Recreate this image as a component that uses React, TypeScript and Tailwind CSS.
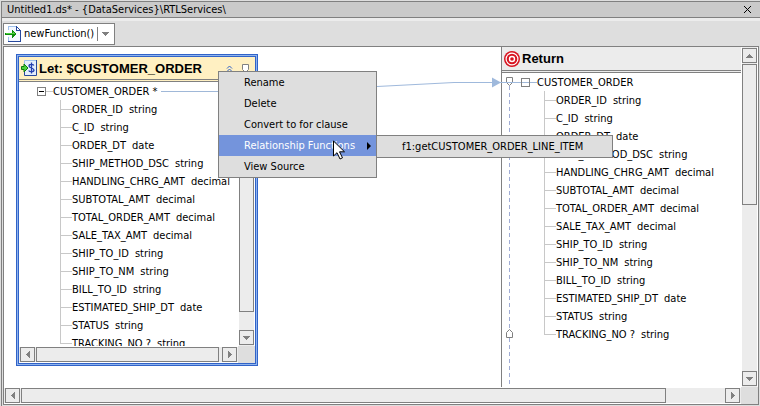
import type { ReactNode } from 'react';

type Field = { name: string; type: string };

const fields: Field[] = [
  { name: 'ORDER_ID', type: 'string' },
  { name: 'C_ID', type: 'string' },
  { name: 'ORDER_DT', type: 'date' },
  { name: 'SHIP_METHOD_DSC', type: 'string' },
  { name: 'HANDLING_CHRG_AMT', type: 'decimal' },
  { name: 'SUBTOTAL_AMT', type: 'decimal' },
  { name: 'TOTAL_ORDER_AMT', type: 'decimal' },
  { name: 'SALE_TAX_AMT', type: 'decimal' },
  { name: 'SHIP_TO_ID', type: 'string' },
  { name: 'SHIP_TO_NM', type: 'string' },
  { name: 'BILL_TO_ID', type: 'string' },
  { name: 'ESTIMATED_SHIP_DT', type: 'date' },
  { name: 'STATUS', type: 'string' },
  { name: 'TRACKING_NO ?', type: 'string' },
];

const arrows = {
  up: 'M3 0h1v1h1v1h1v1h1v1H0V3h1V2h1V1h1z',
  down: 'M0 0h7v1H6v1H5v1H4v1H3V3H2V2H1V1H0z',
  left: 'M4 0v7H3V6H2V5H1V4H0V3h1V2h1V1h1V0z',
  right: 'M0 0v7h1V6h1V5h1V4h1V3H3V2H2V1H1V0z',
};

type Direction = keyof typeof arrows;

function Arrow({ direction }: { direction: Direction }) {
  const upright = direction === 'up' || direction === 'down';
  return (
    <svg width={upright ? 7 : 4} height={upright ? 4 : 7} fill="currentColor" shapeRendering="crispEdges" aria-hidden="true">
      <path d={arrows[direction]} />
    </svg>
  );
}

function ScrollButton({ direction }: { direction: Direction }) {
  return (
    <button
      type="button"
      aria-label={`Scroll ${direction}`}
      className="flex size-[15px] shrink-0 items-center justify-center border border-[#808080] bg-[#ececec] text-[#808080]"
    >
      <Arrow direction={direction} />
    </button>
  );
}

function VerticalScroll({ thumb }: { thumb: string }) {
  return (
    <div className="flex w-[17px] shrink-0 flex-col border-x border-white bg-[#ececec] py-px">
      <ScrollButton direction="up" />
      <div className="flex-1 pt-px">
        <div className={`border border-[#808080] bg-[#ececec] ${thumb}`} />
      </div>
      <ScrollButton direction="down" />
    </div>
  );
}

function HorizontalScroll({ thumb }: { thumb: string }) {
  return (
    <div className="flex h-[17px] min-w-0 flex-1 border-y border-white bg-[#ececec] px-px">
      <ScrollButton direction="left" />
      <div className="flex-1 pl-px">
        <div className={`h-[15px] border border-[#808080] bg-[#ececec] ${thumb}`} />
      </div>
      <ScrollButton direction="right" />
    </div>
  );
}

function FieldList() {
  return (
    <ul>
      {fields.map((field, i) => (
        <li key={field.name} className="flex h-[18px] items-start leading-5 whitespace-nowrap">
          <span className="flex w-3 flex-col self-stretch">
            <span className="h-[10px] border-b border-l border-[#c8c8c8]" />
            {i < fields.length - 1 && <span className="flex-1 border-l border-[#c8c8c8]" />}
          </span>
          <span>{field.name}</span>
          <span className="ml-1.5">{field.type}</span>
        </li>
      ))}
    </ul>
  );
}

function FunctionIcon() {
  return (
    <svg width="16" height="16" viewBox="0 0 16 16" shapeRendering="crispEdges" aria-hidden="true">
      <path d="M3 .5h8.5l4 4v11H3z" fill="#f4f8ff" />
      <path d="M3 0h9v1H3z" fill="#9fc0ea" />
      <path d="M3 0h1v4H3zM3 11h1v5H3z" fill="#9fc0ea" />
      <path d="M3 15h13v1H3zM15 4h1v12h-1zM11 0h1v1h1v1h1v1h1v1h1v1h-5z" fill="#28489c" />
      <path d="M12 2h1v1h1v1h-2z" fill="#fff" />
      <path d="M0 7h7V4h1v1h1v1h1v1h1v2h-1v1H9v1H8v1H7V9H0z" fill="#0c8a0c" />
      <path d="M1 7h7V6h1v1h1v1H1z" fill="#4cd03c" />
    </svg>
  );
}

function LetIcon() {
  return (
    <svg width="16" height="16" viewBox="0 0 16 16" aria-hidden="true">
      <path d="M3 .5h12.5v15H3z" fill="#e4eefc" />
      <path d="M3.500 4V.5H15" fill="none" stroke="#9fc0ea" />
      <path d="M3.500 12v3.500h12V0" fill="none" stroke="#28489c" />
      <path d="M.5 6.500h2.500V4L7 8l-4 4V9.500H.5z" fill="#4cd03c" stroke="#0c7a0c" />
      <path d="M12.800 5.500C12 4 8 3.800 8 6s5 1.800 5 4-4.500 2.200-5.300.5M10.500 2.500v11" fill="none" stroke="#2440b0" strokeWidth="1.300" />
    </svg>
  );
}

function TargetIcon() {
  return (
    <svg width="16" height="16" viewBox="0 0 16 16" aria-hidden="true">
      <circle cx="8" cy="8" r="8" fill="#d81420" />
      <circle cx="8" cy="8" r="6.500" fill="#fff" />
      <circle cx="8" cy="8" r="5.300" fill="#d81420" />
      <circle cx="8" cy="8" r="3.200" fill="#fff" />
      <circle cx="8" cy="8" r="1.800" fill="#d81420" />
    </svg>
  );
}

function ZoneMarker({ flipped = false }: { flipped?: boolean }) {
  return (
    <svg width="7" height="9" viewBox="0 0 7 9" className={flipped ? 'rotate-180' : ''} aria-hidden="true">
      <path d="M.5.5h6v5l-3 3-3-3z" fill="#fff" stroke="#808080" />
    </svg>
  );
}

function MenuItem({ children, active = false }: { children: ReactNode; active?: boolean }) {
  return (
    <button
      type="button"
      role="menuitem"
      className={`flex h-[21px] w-full items-center justify-between pr-[5px] pl-[25px] whitespace-nowrap ${active ? 'bg-[#7494dc] text-white' : ''}`}
    >
      {children}
    </button>
  );
}

function LetPanel() {
  return (
    <section className="mt-[7px] ml-3 w-[242px] shrink-0 self-start border border-[#3163c8] bg-[#8fb4ee] p-px">
      <div className="border border-[#3163c8] bg-white">
        <header className="flex h-[25px] items-center border-b-3 border-double border-[#808080] bg-[#fff0c2] pr-[6px] pl-[2px]">
          <LetIcon />
          <h2 className="ml-[2px] flex-1 pt-px font-['Liberation_Sans',Arial,sans-serif] text-[13px] leading-4 font-bold whitespace-nowrap">
            Let: $CUSTOMER_ORDER
          </h2>
          <button type="button" aria-label="Collapse" className="mr-[9px]">
            <svg width="7" height="7" viewBox="0 0 7 7" fill="none" stroke="#3163c8" aria-hidden="true">
              <path d="M1 3.500 3.500 1 6 3.500M1 6.500 3.500 4 6 6.500" />
            </svg>
          </button>
          <ZoneMarker />
        </header>
        <div className="flex h-[264px] overflow-hidden">
          <div className="min-w-0 flex-1 overflow-hidden">
            <div className="flex h-[18px] items-center pl-[18px] whitespace-nowrap">
              <button
                type="button"
                aria-label="Collapse CUSTOMER_ORDER"
                className="flex size-[9px] items-center justify-center border border-[#808080]"
              >
                <span className="h-px w-[5px] bg-black" />
              </button>
              <span className="h-px w-[7px] bg-[#c8c8c8]" />
              <span className="self-start leading-5">CUSTOMER_ORDER *</span>
              <span className="ml-1 h-px flex-1 bg-[#a0b8d8]" />
            </div>
            <div className="pl-[41px]">
              <FieldList />
            </div>
          </div>
          <VerticalScroll thumb="h-[213px]" />
        </div>
        <div className="flex">
          <HorizontalScroll thumb="w-[183px]" />
          <div className="w-[17px] bg-[#dedede]" />
        </div>
      </div>
    </section>
  );
}

function ReturnPanel() {
  return (
    <section className="ml-auto flex w-[240px] shrink-0 flex-col border-l border-[#808080] bg-white">
      <header className="flex h-[26px] items-center border-b-3 border-double border-[#808080] bg-[#ececec] pl-[2px]">
        <TargetIcon />
        <h2 className="ml-[2px] pt-px font-['Liberation_Sans',Arial,sans-serif] text-[13px] leading-4 font-bold">Return</h2>
      </header>
      <div className="flex flex-1">
        <div className="flex w-[15px] flex-col items-center">
          <span className="h-1 w-px" />
          <ZoneMarker />
          <span className="h-[243px] w-px bg-[repeating-linear-gradient(to_bottom,#a0acd4_0_4px,transparent_4px_7px)]" />
          <ZoneMarker flipped />
          <span className="w-px flex-1 bg-[repeating-linear-gradient(to_bottom,#a0acd4_0_4px,transparent_4px_7px)]" />
        </div>
        <div>
          <div className="flex h-[18px] items-center">
            <span className="h-px w-1 bg-[#a0b8d8]" />
            <button
              type="button"
              aria-label="Collapse CUSTOMER_ORDER"
              className="flex size-[9px] items-center border border-[#808080]"
            >
              <span className="h-px flex-1 bg-[#a0b8d8]" />
            </button>
            <span className="h-px w-[7px] bg-[#a0b8d8]" />
            <span className="self-start leading-5">CUSTOMER_ORDER</span>
          </div>
          <div className="pl-[27px]">
            <FieldList />
          </div>
        </div>
      </div>
    </section>
  );
}

function ContextMenu() {
  return (
    <div className="absolute top-6 left-[214px] flex items-start">
      <div role="menu" className="w-[159px] border border-[#808080] bg-[#dedede]">
        <MenuItem>Rename</MenuItem>
        <MenuItem>Delete</MenuItem>
        <MenuItem>Convert to for clause</MenuItem>
        <MenuItem active>
          Relationship Functions
          <svg width="4" height="8" viewBox="0 0 4 8" className="text-black" aria-hidden="true">
            <path d="M0 0l4 4-4 4z" fill="currentColor" />
          </svg>
        </MenuItem>
        <MenuItem>View Source</MenuItem>
      </div>
      <div role="menu" className="mt-16 -ml-px w-[237px] border border-[#808080] bg-[#dedede]">
        <MenuItem>f1:getCUSTOMER_ORDER_LINE_ITEM</MenuItem>
      </div>
      <svg width="12" height="20" viewBox="0 0 12 20" className="absolute top-[69px] left-[115px]" aria-hidden="true">
        <path d="M.5 1v15l3.500-3.300 3 6.300 2.500-1.200-3-6h5z" fill="#fff" stroke="#000" />
      </svg>
    </div>
  );
}

export default function App() {
  return (
    <div className="flex min-h-screen flex-col bg-[#dedede] pt-px pl-px font-['DejaVu_Sans_Condensed','DejaVu_Sans',Tahoma,sans-serif] text-[11px] leading-[14px] text-black">
      <div className="flex flex-1 flex-col border-l border-[#808080]">
        <header className="flex h-[17px] items-center justify-between border-y border-[#808080] bg-[#cacaca] pr-[9px] pl-[5px]">
          <h1>Untitled1.ds* - {'{DataServices}\\RTLServices\\'}</h1>
          <button type="button" aria-label="Close">
            <svg width="7" height="7" viewBox="0 0 7 7" stroke="#000" aria-hidden="true">
              <path d="M0 0l7 7M7 0L0 7" />
            </svg>
          </button>
        </header>
        <div className="flex h-7 items-center border-t-3 border-[#ececec] pl-px">
          <label className="relative flex h-[22px] w-28 items-center border border-[#808080] bg-white pl-px">
            <FunctionIcon />
            <select aria-label="Function" className="h-5 flex-1 appearance-none bg-transparent pl-[3px]">
              <option>newFunction()</option>
            </select>
            <span className="pointer-events-none absolute top-[3px] right-[5px] flex h-[14px] items-center border-l border-[#808080] pl-1 text-[#808080]">
              <Arrow direction="down" />
            </span>
          </label>
        </div>
        <main className="mr-px mb-px ml-px flex flex-1 flex-col border border-[#808080] bg-white">
          <div className="flex flex-1">
            <div className="relative flex min-w-0 flex-1 overflow-hidden">
              <LetPanel />
              <ReturnPanel />
              <svg width="520" height="60" className="pointer-events-none absolute top-0 left-0" aria-hidden="true">
                <path d="M254 45L373 39.500 450 35.500H517" fill="none" stroke="#9fb9dc" />
                <path d="M488 30.500l9 5-9 5z" fill="#9fb9dc" />
              </svg>
              <ContextMenu />
            </div>
            <VerticalScroll thumb="h-[141px]" />
          </div>
          <div className="flex">
            <HorizontalScroll thumb="w-11/12" />
            <div className="w-[17px] bg-[#dedede]" />
          </div>
        </main>
      </div>
    </div>
  );
}
